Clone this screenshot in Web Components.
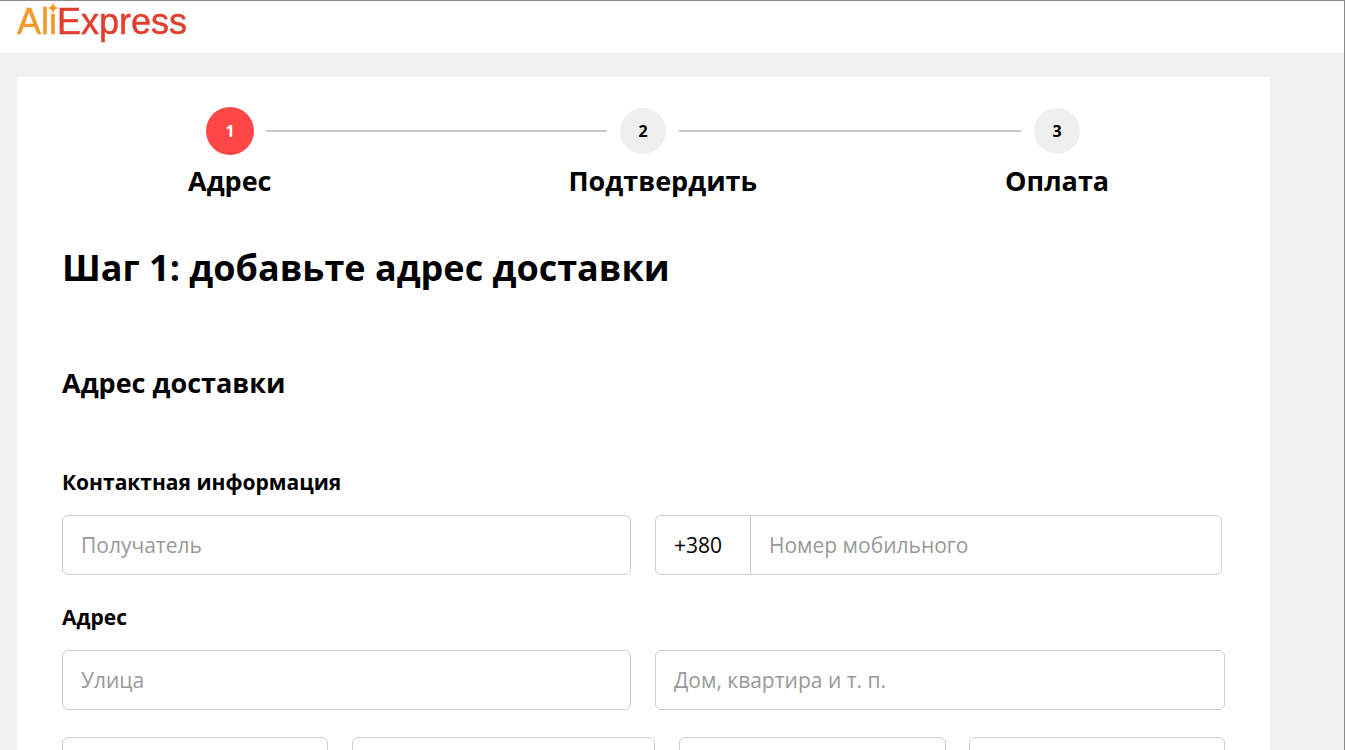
<!DOCTYPE html>
<html lang="ru"><head><meta charset="utf-8"><title>AliExpress</title>
<style>
html,body{margin:0;height:750px;overflow:hidden;background:#f1f1f1;font-family:"Open Sans",sans-serif;color:#000}
body{box-sizing:border-box;border-right:1px solid #8a8a8a}
</style></head><body>
<ae-header></ae-header>
<ae-card>
  <ae-stepper></ae-stepper>
  <ae-title level="1">Шаг 1: добавьте адрес доставки</ae-title>
  <ae-title level="2">Адрес доставки</ae-title>
  <ae-title level="3">Контактная информация</ae-title>
  <ae-row cols="569px 567px">
    <ae-field placeholder="Получатель"></ae-field>
    <ae-field placeholder="Номер мобильного" prefix="+380"></ae-field>
  </ae-row>
  <ae-title level="4">Адрес</ae-title>
  <ae-row cols="569px 570px">
    <ae-field placeholder="Улица"></ae-field>
    <ae-field placeholder="Дом, квартира и т. п."></ae-field>
  </ae-row>
  <ae-row cols="266px 303px 266px 256px" style="margin-top:27px">
    <ae-field></ae-field><ae-field></ae-field><ae-field style="margin-right:-1px"></ae-field><ae-field></ae-field>
  </ae-row>
</ae-card>
<script>
function def(name, html, extra){
  customElements.define(name, class extends HTMLElement{
    constructor(){super();this.attachShadow({mode:'open'}).innerHTML=html;}
    connectedCallback(){extra&&extra.call(this,this.shadowRoot);}
  });
}
def('ae-header',`<style>
:host{display:flex;height:53px;background:#fff;border-top:1px solid #8a8a8a;box-sizing:border-box;padding-left:17px;position:relative}
.logo{font:400 36px/41px "Liberation Sans",sans-serif;-webkit-text-stroke:.5px currentColor;display:block;white-space:nowrap;height:41px;position:relative;filter:blur(.35px)}
.a{color:#f39a2b}.e{color:#e03f2e}
svg{position:absolute;left:30px;top:1px}
</style><div class="logo"><span class="a">Ali</span><span class="e">Express</span>
<svg width="12" height="12" viewBox="0 0 12 12"><path d="M6 0C6.4 3.6 8 5.4 12 6 8 6.6 6.4 8.4 6 12 5.6 8.4 4 6.6 0 6 4 5.4 5.6 3.6 6 0Z" fill="#f39a2b"/></svg></div>`);
def('ae-card',`<style>
:host{display:block;box-sizing:border-box;width:1253px;height:673px;margin:24px 0 0 17px;background:#fff;padding:30px 0 0 45px}
</style><slot></slot>`);
def('ae-stepper',`<style>
:host{display:block;margin-left:-45px;width:1253px}
.top{display:flex;align-items:center;padding-left:189px;height:48px}
.c{width:46px;height:46px;border-radius:50%;background:#efefef;display:flex;align-items:center;justify-content:center;font-weight:700;font-size:16px;flex:none}
.c.on{width:48px;height:48px;background:#ff4747;color:#fff}
.l{height:2px;background:#c8c8c8;flex:none}
.labels{display:flex;padding-left:171px;margin-top:6px;font-weight:700;font-size:27px;line-height:40px;white-space:nowrap}
</style>
<div class="top"><div class="c on">1</div><div class="l" style="width:341px;margin:0 13px 0 12px"></div><div class="c">2</div><div class="l" style="width:342px;margin:0 13px"></div><div class="c">3</div></div>
<div class="labels"><span>Адрес</span><span style="margin-left:297px">Подтвердить</span><span style="margin-left:248px">Оплата</span></div>`);
def('ae-title',`<style>
:host{display:block;font-weight:700;white-space:nowrap}
:host([level="1"]){font-size:36px;line-height:50px;margin-top:42px}
:host([level="2"]){font-size:27px;line-height:36px;margin-top:72px}
:host([level="3"]){font-size:21px;line-height:28px;margin-top:67px;margin-bottom:19px}
:host([level="4"]){font-size:21px;line-height:28px;margin-top:28px;margin-bottom:19px}
</style><slot></slot>`);
def('ae-row',`<style>
:host{display:grid;column-gap:24px}
</style><slot></slot>`,function(){this.style.gridTemplateColumns=this.getAttribute('cols');});
def('ae-field',`<style>
:host{display:flex;height:60px;box-sizing:border-box;border:1px solid #ccc;border-radius:6px;background:#fff;font-size:21px;line-height:58px;overflow:hidden;white-space:nowrap}
.p{width:95px;flex:none;box-sizing:border-box;border-right:1px solid #ccc;padding-left:18px;color:#000}
.t{padding-left:18px;color:#999}
.p[hidden],.t:empty{display:none}
</style><div class="p" hidden></div><div class="t"></div>`,function(r){
  r.querySelector('.t').textContent=this.getAttribute('placeholder')||'';
  const p=this.getAttribute('prefix');
  if(p){const e=r.querySelector('.p');e.hidden=false;e.textContent=p;}
});
</script>
</body></html>
